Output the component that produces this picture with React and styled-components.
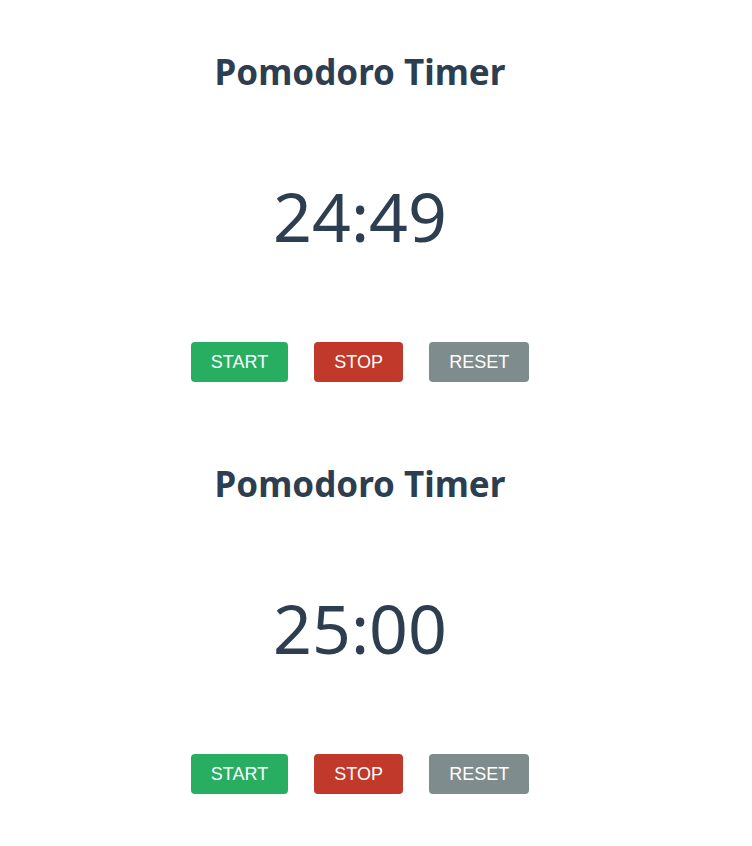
import React, { useState } from 'react'
import styled, { createGlobalStyle } from 'styled-components'

const GlobalStyle = createGlobalStyle`
  body {
    margin: 0;
    background: #ffffff;
    font-family: 'Noto Sans', 'Open Sans', sans-serif;
  }
`

const COLORS = {
  start: '#27ae60',
  stop: '#c0392b',
  reset: '#7f8c8d',
}

const format = seconds => {
  const m = String(Math.floor(seconds / 60)).padStart(2, '0')
  const s = String(seconds % 60).padStart(2, '0')
  return `${m}:${s}`
}

const Timer = ({ seconds }) =>
  <Block>
    <Title>Pomodoro Timer</Title>
    <Clock>{format(seconds)}</Clock>
    <Buttons>
      <Button kind="start">START</Button>
      {' '}
      <Button kind="stop">STOP</Button>
      {' '}
      <Button kind="reset">RESET</Button>
    </Buttons>
  </Block>

const App = () => {
  const [timers] = useState([1489, 1500])
  return (
    <Page>
      <GlobalStyle />
      {timers.map((t, i) => <Timer key={i} seconds={t} />)}
    </Page>
  )
}

export default App

const Page = styled.div`
  width: 720px;
`

const Block = styled.div`
  padding: 48px 0 30px;
  text-align: center;
`

const Title = styled.h1`
  margin: 0;
  font-size: 35px;
  line-height: 48px;
  font-weight: 700;
  color: #2c3e50;
`

const Clock = styled.div`
  margin-top: 72px;
  font-size: 68px;
  line-height: 96px;
  color: #2c3e50;
`

const Buttons = styled.div`
  margin-top: 78px;
  height: 40px;
`

const Button = styled.button`
  margin: 0 11px;
  padding: 10px 20px;
  border: none;
  border-radius: 4px;
  background: ${props => COLORS[props.kind]};
  color: #ffffff;
  font-family: 'Liberation Sans', Arial, sans-serif;
  font-size: 18px;
  line-height: 20px;
  cursor: pointer;
`
